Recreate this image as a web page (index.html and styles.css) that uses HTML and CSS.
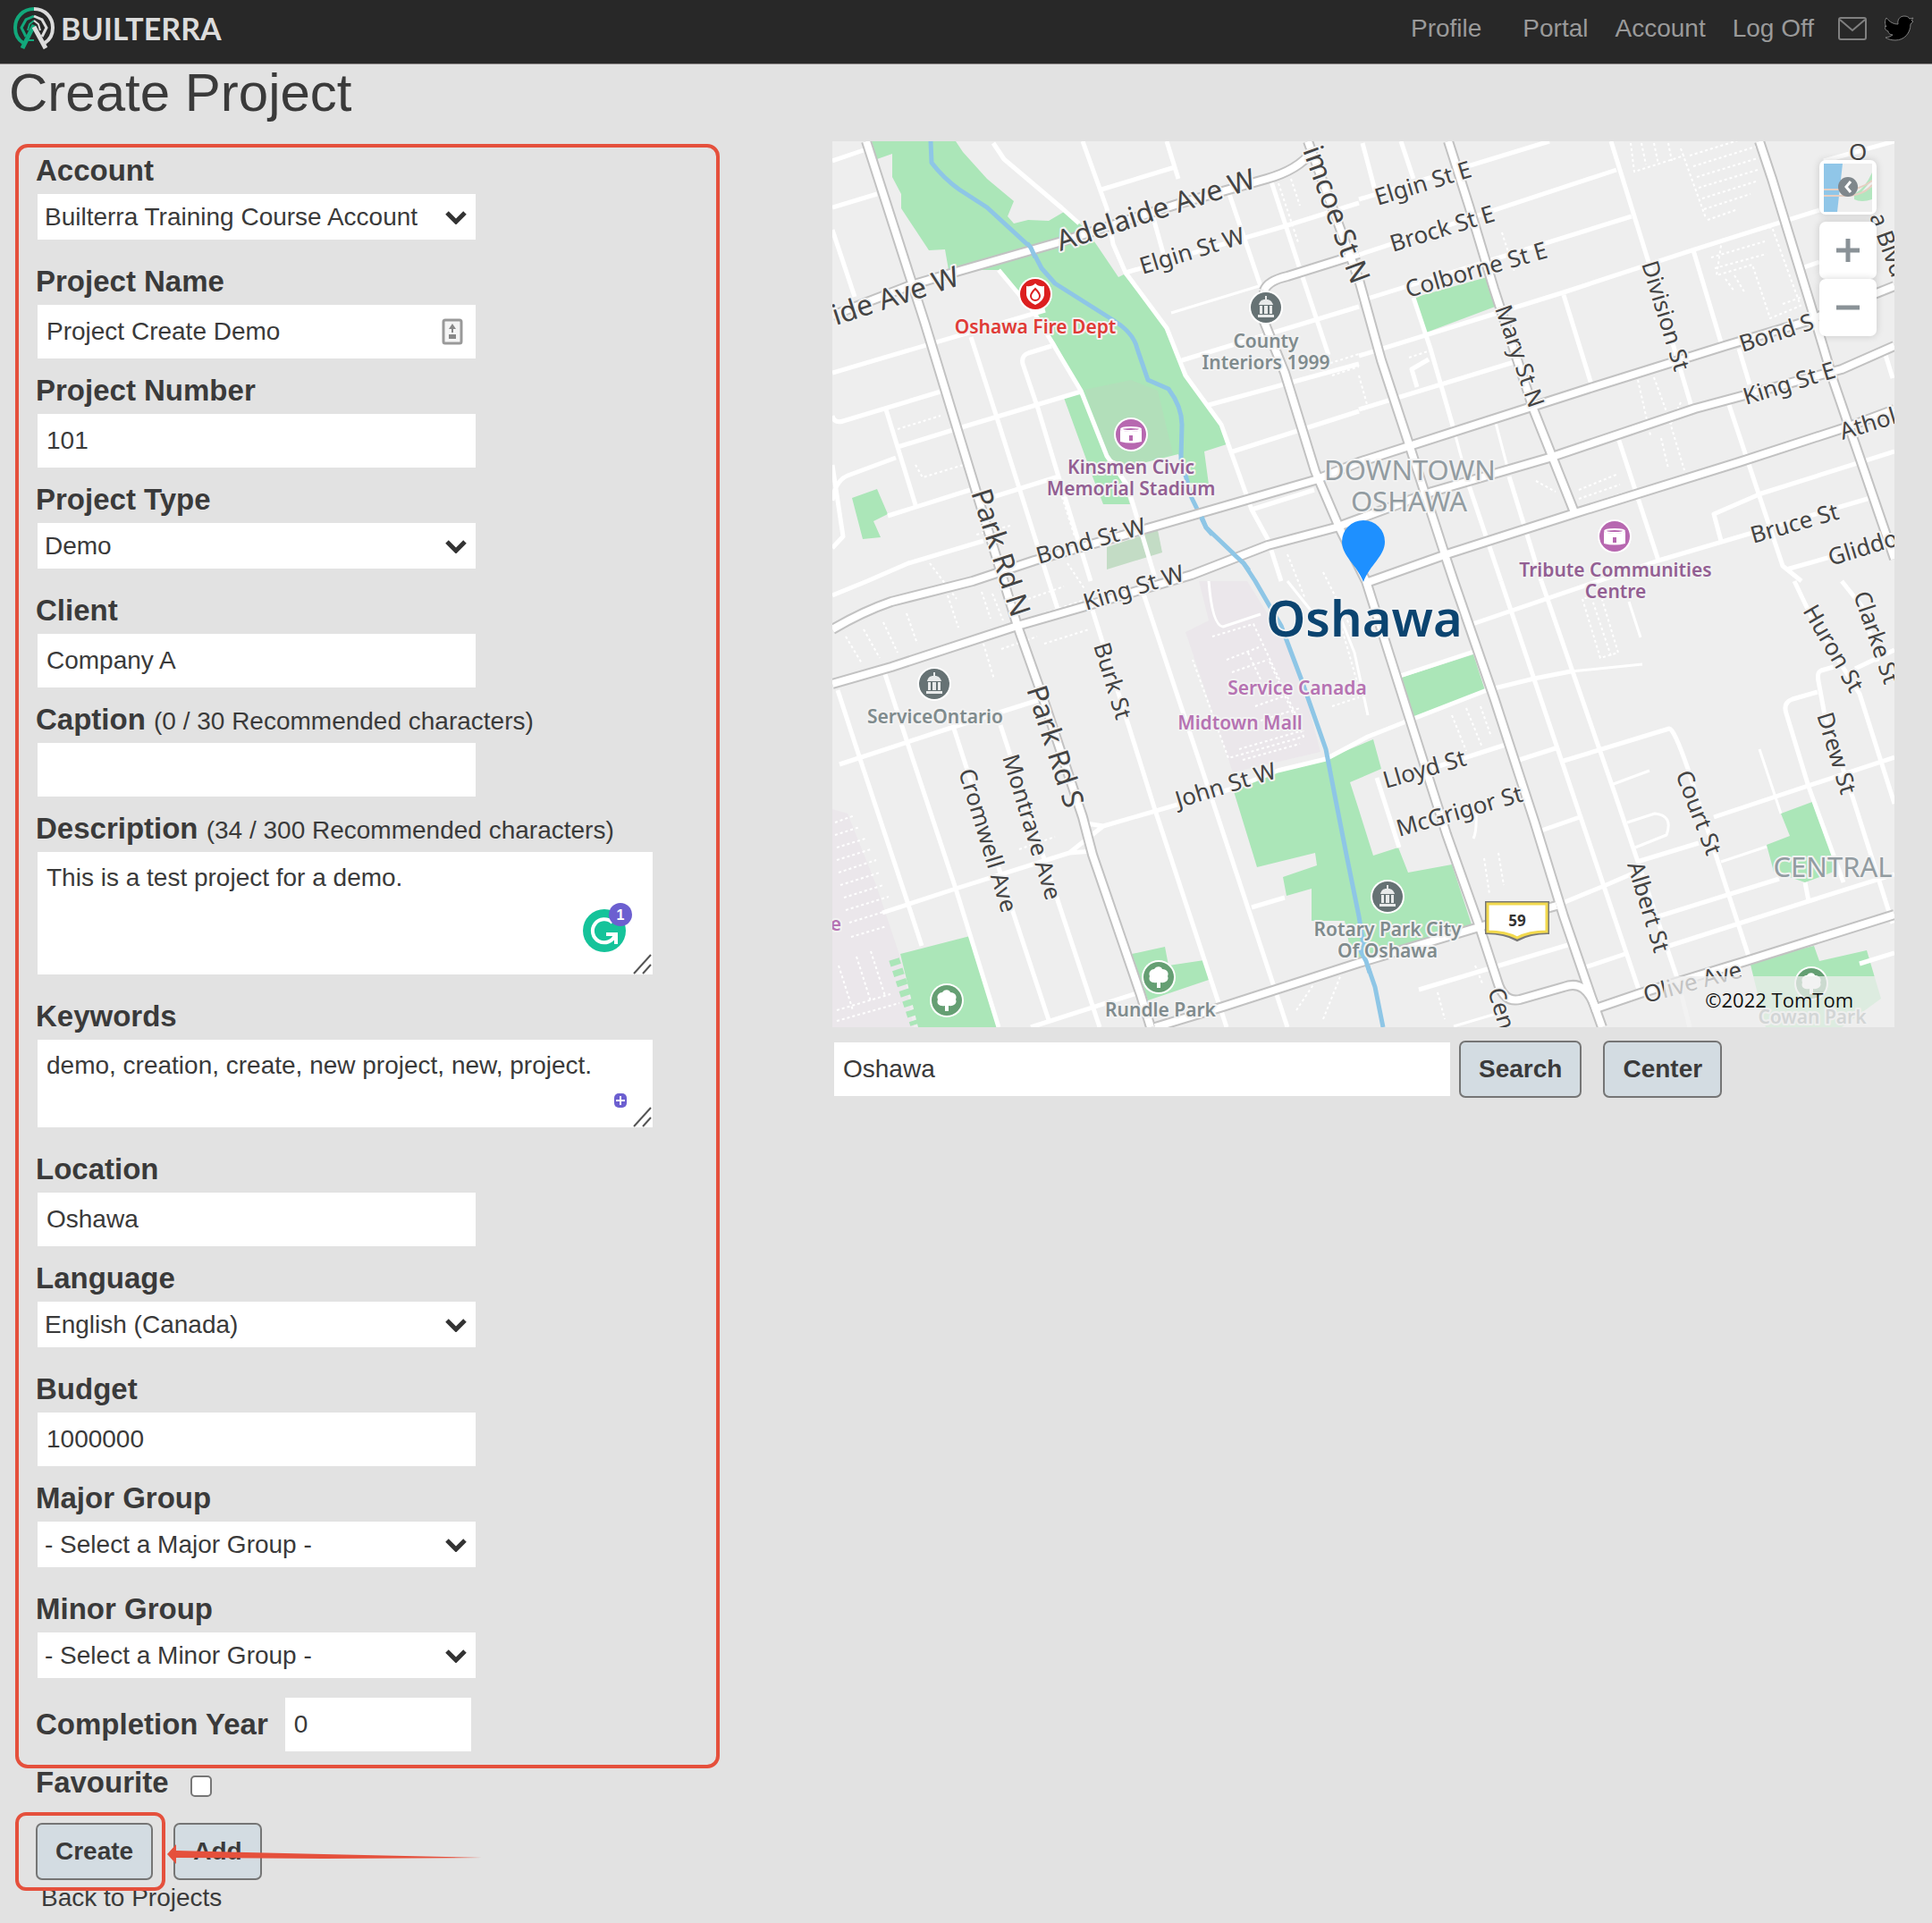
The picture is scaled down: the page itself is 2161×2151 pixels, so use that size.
FILE: index.html
```html
<!DOCTYPE html>
<html lang="en">
  <head>
    <meta charset="UTF-8" />
    <meta name="viewport" content="width=device-width, initial-scale=1.0" />
    <title>Create Project - Builterra</title>
    <link rel="stylesheet" href="styles.css">
  </head>
  <body>
    <header class="topbar">
      <a class="logo" href="#">
        <svg class="logo-mark" viewBox="0 0 46 48" aria-hidden="true">
          <g fill="none" stroke="#12a87b">
            <path d="M23 2C11 2 2 11 2 23c0 9 4 14 9 17" stroke-width="4" />
            <path d="M23 10l-9 4-5 9 5 10" stroke-width="3" />
            <path d="M10 46l13-26" stroke-width="5" />
            <path d="M23 15l-5 4-2 7M17 37h6" stroke-width="2" />
          </g>
          <g fill="none" stroke="#dcdcdc">
            <path d="M23 2c12 0 21 9 21 21 0 9-4 14-9 17" stroke-width="4" />
            <path d="M23 10l9 4 5 9-5 10" stroke-width="3" />
            <path d="M36 46L23 22" stroke-width="5" />
            <path d="M23 15l5 4 2 7" stroke-width="2" />
          </g>
        </svg>
        <span>BUILTERRA</span>
      </a>
      <nav class="nav">
        <a class="nav-profile" href="#">Profile</a>
        <a href="#">Portal</a>
        <a href="#">Account</a>
        <a href="#">Log Off</a>
        <a class="nav-icon" href="#" aria-label="Mail">
          <svg width="32" height="26" viewBox="0 0 32 26">
            <rect x="1" y="1" width="30" height="24" rx="2" />
            <path d="M2 3l14 12L30 3" />
          </svg>
        </a>
        <a class="nav-icon" href="#" aria-label="Twitter">
          <svg width="33" height="30" viewBox="0 0 33 30">
            <path class="bird" d="M2 3c4 5 8 7 13 7-1-5 2-9 7-9 3 0 5 1 6 3l4-1-2 3 2 1-3 3c0 10-7 18-17 18-4 0-8-1-11-3 3 0 5-1 8-3-3 0-5-2-5-4-3-1-4-3-4-6l2 1C0 10 0 6 2 3z" />
          </svg>
        </a>
      </nav>
    </header>

    <main>
      <h1>Create Project</h1>

      <div class="columns">
        <form class="project-form">
          <div class="details">
            <div class="field field-select">
              <label for="account">Account</label>
              <select id="account"><option>Builterra Training Course Account</option></select>
            </div>
            <div class="field">
              <label for="name">Project Name</label>
              <div class="input-wrap">
                <input type="text" id="name" value="Project Create Demo" />
                <svg class="autofill" width="24" height="30" viewBox="0 0 24 30" aria-hidden="true">
                  <rect x="2" y="2" width="20" height="26" rx="2" fill="#f4f4f4" stroke="#999" stroke-width="3" />
                  <path d="M12 6l4 6h-3v4h-2v-4H8zM8 18h8v5H8z" fill="#888" />
                </svg>
              </div>
            </div>
            <div class="field">
              <label for="number">Project Number</label>
              <input type="text" id="number" value="101" />
            </div>
            <div class="field field-select">
              <label for="type">Project Type</label>
              <select id="type"><option>Demo</option></select>
            </div>
            <div class="field">
              <label for="client">Client</label>
              <input type="text" id="client" value="Company A" />
            </div>
            <div class="field">
              <label for="caption">Caption <small>(0 / 30 Recommended characters)</small></label>
              <input type="text" id="caption" />
            </div>
            <div class="field field-area">
              <label for="description">Description <small>(34 / 300 Recommended characters)</small></label>
              <div class="area-wrap">
                <textarea id="description" class="area-tall">This is a test project for a demo.</textarea>
                <svg class="area-tools" width="90" height="80" viewBox="0 0 90 80" aria-hidden="true">
                  <circle cx="36" cy="31" r="24" fill="#15c39a" />
                  <path d="M45 22a13 13 0 1 0 3 14M38 35h11v11" fill="none" stroke="#fff" stroke-width="4" />
                  <circle cx="54" cy="13" r="13" fill="#6c5fd0" />
                  <text x="54" y="19">1</text>
                  <path class="grip" d="M69 79l19-21M79 79l9-10" />
                </svg>
              </div>
            </div>
            <div class="field field-area">
              <label for="keywords">Keywords</label>
              <div class="area-wrap">
                <textarea id="keywords" class="area-short">demo, creation, create, new project, new, project.</textarea>
                <svg class="area-tools" width="90" height="80" viewBox="0 0 90 80" aria-hidden="true">
                  <rect x="47" y="42" width="14" height="16" rx="5" fill="#6c5fd0" />
                  <path d="M54 45v10M49 50h10" stroke="#fff" stroke-width="2" />
                  <path class="grip" d="M69 79l19-21M79 79l9-10" />
                </svg>
              </div>
            </div>
            <div class="field">
              <label for="location">Location</label>
              <input type="text" id="location" value="Oshawa" />
            </div>
            <div class="field field-select">
              <label for="language">Language</label>
              <select id="language"><option>English (Canada)</option></select>
            </div>
            <div class="field">
              <label for="budget">Budget</label>
              <input type="text" id="budget" value="1000000" />
            </div>
            <div class="field field-select">
              <label for="major">Major Group</label>
              <select id="major"><option>- Select a Major Group -</option></select>
            </div>
            <div class="field field-select">
              <label for="minor">Minor Group</label>
              <select id="minor"><option>- Select a Minor Group -</option></select>
            </div>
            <div class="field-inline">
              <label for="year">Completion Year</label>
              <input type="text" id="year" value="0" />
            </div>
          </div>

          <div class="favourite">
            <label for="favourite">Favourite</label>
            <input type="checkbox" id="favourite" />
          </div>

          <div class="actions">
            <span class="highlight"><button type="button">Create</button></span>
            <button type="button">Add</button>
            <svg class="arrow" width="352" height="22" viewBox="0 0 352 22" aria-hidden="true">
              <path d="M0 11L10 0v7l165 4 177 4-177 1-165-1v7z" />
            </svg>
          </div>
          <a class="back" href="#">Back to Projects</a>
        </form>

        <section class="map-column">
          <div class="map">
            <svg class="map-canvas" viewBox="931 158 1188 991" role="img" aria-label="Map of Oshawa">
              <defs>
                <g id="pin-civic">
                  <circle r="19" fill="#fff" /><circle r="17" fill="#667274" />
                  <path d="M-9 11H9V8H-9zM-7 7h3V-2h-3zM-2 7h4V-2h-4zM4 7h3V-2H4zM-8-3H8C7-7 4-9 1-9v-4h-2v4c-4 0-6 2-7 6z" fill="#e8eaea" />
                </g>
                <g id="pin-venue">
                  <circle r="19" fill="#fff" /><circle r="17" fill="#b768b0" />
                  <path d="M-12-5Q0-1 12-5V8Q0 11-12 8z" fill="#fff" />
                  <ellipse cy="-6" rx="11" ry="2" fill="none" stroke="#fff" stroke-width="2" />
                  <path d="M-2 1h4v6h-4z" fill="#b768b0" />
                </g>
                <g id="pin-park">
                  <circle r="19" fill="#fff" /><circle r="17" fill="#659f73" />
                  <path d="M-2 12V6c-6 1-10-2-8-7-2-5 2-8 5-8 3-4 8-3 9 0 5 0 8 4 6 8 2 4-2 8-8 7v6z" fill="#fff" />
                </g>
                <path id="r-park" d="M969 158L1035 363 1092 550 1138 700 1165 776 1211 914 1222 956 1276 1113 1287 1149" />
                <path id="r-adelaide" d="M931 353L1016 320 1073 303 1188 270 1318 228 1417 200Q1452 190 1467 170" />
                <path id="r-simcoe" d="M1463 158L1509 283 1520 313 1545 403 1577 500 1616 620 1626 650 1671 780 1716 918 1749 1025 1782 1121 1792 1149" />
                <path id="r-centre" d="M1414 325L1414 360 1437 417 1471 527 1498 590 1528 650 1573 792 1618 933 1655 1037 1675 1098Q1682 1122 1700 1118L1749 1104Q1775 1094 1786 1132M1414 325Q1418 314 1440 309L1520 284" />
                <path id="r-mary" d="M1620 158L1643 230 1671 323 1716 460 1761 573" />
                <path id="r-east" d="M1968 158L1982 200 2027 347 2051 427 2084 523 2119 625" />
                <path id="r-bond" d="M931 704Q965 684 997 673L1088 650 1157 627 1287 590 1471 537 1520 517 1626 483 1782 433 1929 387 2019 360 2119 320" />
                <path id="r-king" d="M931 765L997 746 1138 700 1211 679 1333 643 1418 610 1494 590 1602 550 1733 512 1896 457 2060 413 2119 387" />
                <path id="r-athol" d="M1528 652L1618 620 1765 573 1945 517 2068 477 2119 458" />
                <path id="r-olive" d="M1292 1149L1368 1126 1520 1077 1651 1038 1741 1013M1788 1127L1835 1111 1953 1075 2119 1023" />
              </defs>

              <rect x="931" y="158" width="1188" height="991" fill="#eee" />

              <!-- malls and parks -->
              <path class="mall" d="M1341 650H1395L1420 690 1440 720 1456 761 1477 841 1379 864 1326 707 1352 694zM931 905L948 910 980 990 1010 1080 1022 1149H931z" />
              <path class="park" d="M975 158H1069L1077 170 1104 200 1134 225 1127 242 1134 250 1150 246 1173 247 1190 237 1211 253 1226 273 1251 310 1257 307 1305 367 1326 420 1364 473 1372 497 1347 505 1352 542 1330 540 1318 508 1262 522 1240 512 1209 437 1180 383 1157 350 1117 302H1061L1057 279 1039 280 1008 233V217L998 198V172L981 178z" />
              <path class="park" d="M1190 445L1209 440 1238 510 1257 543 1264 564H1234L1222 533z" />
              <path class="park" d="M953 557L981 547 993 575 977 583 985 601 965 603z" />
              <path class="park" d="M1581 333L1663 310 1675 342 1595 372z" />
              <path class="park" d="M1567 758L1648 732 1661 772 1581 804z" />
              <path class="park" d="M1379 882L1429 862 1483 849 1536 827 1545 860 1510 875 1520 906 1536 957 1564 948 1575 976 1624 967 1647 1037 1520 1074 1509 1056 1504 1030 1467 1030V994L1439 1002 1435 981 1473 968 1471 954 1406 970z" />
              <path class="park" d="M1266 1067L1303 1059 1307 1080 1347 1074 1352 1096 1284 1119z" />
              <path class="park" d="M1007 1067L1085 1047 1117 1149H1027z" />
              <path class="park" d="M1992 910L2027 897 2049 956 2051 975 2019 987 1984 975 1976 945 2002 935z" />
              <path class="park" d="M1957 1075L2029 1058 2035 1075 2088 1063 2104 1117 2060 1149H1975z" />
              <path class="hedge" d="M1000 1073L1024 1146" />
              <path d="M1213 436L1265 425 1295 437 1312 508 1262 522 1240 512z" fill="#b2dfba" />
              <path d="M1238 612L1295 593 1300 618 1238 637z" fill="#c3dcc5" />

              <!-- parking lots -->
              <g class="lots">
                <path d="M1824 160l4 32 56-18M1836 160l5 24M1850 160l5 24M1866 160l4 20M1880 166l28 78M1890 174l70-22M1894 186l70-22M1898 198l68-21M1900 210l66-20M1904 222l60-19M1906 234l52-17M1910 246l34-12" />
                <path d="M1926 268l56-14 32 88-34 14-20-60-40 12zM1914 288l60-18M1918 300l58-16M1930 312l10 14M1940 308l12 20M1994 340l22-8" />
                <path d="M1832 425l14 62M1850 422l16 44M1866 466l18 60M1880 450l-12 26M1858 490l8 34M1766 548l44-18M1766 558l46-16M1768 568l46-16M1718 538l22 12" />
                <path d="M1356 712l46-14 56 120M1372 738l36-14M1378 752l40-14M1396 730l14 30M1420 740l38 84-84 24-40-110M1386 838l68-20M1390 850l64-18M1404 790l40-14M1410 806l44-14" />
                <path d="M946 712l18 30M966 704l18 32M988 696l16 34M1014 686l12 34M1060 666l12 36M1098 662l10 30M1110 664l12 30M1150 670l40-14M1156 690l60-20M1168 720l50-16M1100 720l12 40M1120 726l40-14" />
                <path d="M934 920l22-8M934 934l28-9M936 948l32-10M936 962l38-12M938 976l42-14M940 990l44-14M944 1004l44-14M946 1018l48-15M950 1032l48-15M952 1048l40-12M938 1080l16 50M958 1070l16 50M974 1064l16 50M936 1130l60-18M936 1142l70-20" />
                <path d="M1770 670l20 66 20-6-20-66zM1780 668l22 66M1624 800l16 40M1640 792l18 44M1656 790l12 34M1660 960l6 40M1676 954l6 36M1608 1110l8 30M1650 1080l8 20M1140 950l40-14M1004 480l48-15M1024 520l8 14 52-16M1186 550l16 50M1130 588l-38 10" />
                <path d="M1430 205l22 66M1444 200l10 30M1482 408l38-12M1490 420l30-10M1576 400l24-8M1520 420l10 36M1680 260l14 44M1440 620l20 50M1480 640l30 60M1194 630l20 30M1040 630l30 40M1500 700l20 70M1490 790l30-10M1480 1140l20-50M1450 1130l20-30" />
              </g>

              <!-- local streets -->
              <g class="streets">
                <path d="M931 180L966 168M931 232L981 217M931 257L956 332M1111 160L1123 178 1188 233 1207 250M1211 158L1238 233 1245 273 1259 305 1305 367 1326 420 1366 475 1400 570 1418 603 1433 650M1305 158L1318 200M1287 233L1303 290M1232 212L1314 187M1375 217L1410 320M1421 200L1456 307 1486 397M1259 305L1437 253 1520 227M1322 403L1520 343M1352 453L1520 407M1379 505L1520 460" />
                <path d="M931 417L1169 347M931 465Q933 474 943 471L1052 438M1004 500L1069 480 1209 438M991 458L1025 568M1086 377L1115 467 1173 650 1184 684M1176 387L1150 395Q1142 398 1144 407L1161 457 1184 533 1220 650M1117 302L1157 350 1209 437 1238 510 1261 543 1293 650M931 560Q934 538 948 532L1002 512M993 577L1085 548M1104 558L1184 533M931 520L943 600 931 613M931 666L970 650 1016 630 1100 605M1400 570L1470 548" />
                <path d="M937 772L962 849 1016 1012 1031 1058M989 751L1016 834 1069 994 1117 1149M939 855L1067 813 1165 782M1067 815L1132 1017 1174 1144M1119 811L1184 1010 1230 1149M987 1021L1069 994 1196 954 1234 924 1379 882M1215 921L1234 924M1196 954L1222 952M1219 673L1291 903 1372 1149M1278 661L1356 895 1440 1149M1400 1015L1437 1004M1153 1149L1272 1111M1379 882L1429 862 1483 849 1530 824 1573 807 1663 772 1716 759 1757 751" />
                <path d="M1524 160L1538 213M1567 158L1581 200M1520 223L1733 158M1520 285L1808 190M1520 337L1825 242M1520 398L1749 327 1892 280 2035 235M1520 458L1700 403M1802 158L1843 290 1892 455M1894 280L1925 383M1749 330L1780 430M1581 333L1600 390 1626 480M1643 543L1679 650M1585 433L1579 413 1598 402M1688 533L1724 650M1810 490L1855 627M1933 450L1994 633 2015 650M1945 390L1957 430M2109 397L2117 423M2015 300L2035 293M2040 180L2119 158" />
                <path d="M1647 698L1855 627 2092 557M1925 605L1917 575 1970 552 2119 505M1998 637L2119 603M1679 650L1835 1113M1724 650L1806 887 1876 1094 1890 1149M1563 757L1651 728M1600 860L1684 833M1696 851L1743 836M1749 851L1867 815Q1872 814 1888 860L1957 1073M1724 929L1767 914M1743 1012L1794 991 1831 975M1831 964L1900 943M1917 914L2119 847M1855 1025L1990 983M1867 1058L1945 1033 2023 1008 2119 978M2019 987L2023 1008" />
                <path d="M2033 774L2005 782Q1994 786 1998 798L2023 880 2062 987M2051 746L2037 750Q2032 752 2034 762L2041 800 2072 891 2117 1033M2007 650L2027 692 2080 776 2119 899M2060 650L2084 680 2100 740M2075 748L2119 727M1587 1107L1757 1056M1773 1082L1818 1067M1540 870L1565 948M2080 1078L2119 1066" />
              </g>
              <g class="lanes">
                <path d="M1310 350L1418 317M1757 751L1837 743M1822 673L1835 713M1802 878L1845 862M1820 920L1851 910Q1872 912 1864 934L1829 948M1925 964L1976 947M1968 838L1992 910M1673 473L1688 530M1626 480L1643 543M1352 650Q1356 700 1368 701L1410 687M1626 1148L1680 1132M1440 650L1480 700M1651 910Q1652 930 1648 938M1495 680L1515 730 1530 800" />
              </g>

              <path class="river" d="M1041 158L1042 182Q1056 200 1073 212L1104 232 1153 277 1165 300 1180 317 1245 358Q1268 372 1272 390L1284 425 1307 435Q1322 455 1322 475L1321 513 1333 557 1349 590 1391 630 1404 650 1433 700 1456 761 1483 838 1494 895 1506 956 1520 1025 1528 1075 1538 1104 1547 1149" />

              <!-- main roads: grey casing under a white line -->
              <g class="casing">
                <use href="#r-adelaide" /><use href="#r-bond" /><use href="#r-king" /><use href="#r-athol" /><use href="#r-olive" />
                <use href="#r-park" /><use href="#r-centre" /><use href="#r-simcoe" /><use href="#r-mary" /><use href="#r-east" />
              </g>
              <g class="roads">
                <use href="#r-adelaide" /><use href="#r-bond" /><use href="#r-king" /><use href="#r-athol" /><use href="#r-olive" />
                <use href="#r-park" /><use href="#r-centre" /><use href="#r-simcoe" /><use href="#r-mary" /><use href="#r-east" />
              </g>
              <path class="river" d="M1149 272L1153 277 1158 288M1344 578L1349 590 1356 598M1378 618L1391 630 1397 638M1520 1060L1528 1075 1532 1088" />

              <g class="street-names major">
                <text transform="translate(1186 281) rotate(-18)">Adelaide Ave W</text>
                <text transform="translate(935 364) rotate(-18)">ide Ave W</text>
                <text transform="translate(1457 168) rotate(70)">imcoe St N</text>
                <text transform="translate(1086 551) rotate(72)">Park Rd N</text>
                <text transform="translate(1148 771) rotate(72)">Park Rd S</text>
              </g>
              <g class="street-names">
                <text transform="translate(1278 307) rotate(-17)">Elgin St W</text>
                <text transform="translate(1541 230) rotate(-17)">Elgin St E</text>
                <text transform="translate(1558 282) rotate(-17)">Brock St E</text>
                <text transform="translate(1575 333) rotate(-16)">Colborne St E</text>
                <text transform="translate(1672 345) rotate(71)">Mary St N</text>
                <text transform="translate(1836 295) rotate(73)">Division St</text>
                <text transform="translate(1949 394) rotate(-18)">Bond S</text>
                <text transform="translate(1953 453) rotate(-17)">King St E</text>
                <text transform="translate(2061 492) rotate(-17)">Athol</text>
                <text transform="translate(1961 608) rotate(-16)">Bruce St</text>
                <text transform="translate(2048 633) rotate(-17)">Gliddon</text>
                <text transform="translate(2091 242) rotate(70)">a Blvd</text>
                <text transform="translate(2068 179)">O</text>
                <text transform="translate(1162 631) rotate(-16)">Bond St W</text>
                <text transform="translate(1215 683) rotate(-17)">King St W</text>
                <text transform="translate(1223 722) rotate(73)">Burk St</text>
                <text transform="translate(1121 847) rotate(73)">Montrave Ave</text>
                <text transform="translate(1072 863) rotate(73)">Cromwell Ave</text>
                <text transform="translate(1318 904) rotate(-17)">John St W</text>
                <text transform="translate(1550 882) rotate(-16)">Lloyd St</text>
                <text transform="translate(1565 936) rotate(-16)">McGrigor St</text>
                <text transform="translate(2016 683) rotate(60)">Huron St</text>
                <text transform="translate(2073 665) rotate(71)">Clarke St</text>
                <text transform="translate(2032 800) rotate(73)">Drew St</text>
                <text transform="translate(1874 866) rotate(69)">Court St</text>
                <text transform="translate(1820 967) rotate(73)">Albert St</text>
                <text transform="translate(1664 1108) rotate(73)">Cen</text>
                <text transform="translate(1841 1122) rotate(-15)">Olive Ave</text>
              </g>
              <g class="districts">
                <text x="1577" y="537">DOWNTOWN</text>
                <text x="1576" y="572">OSHAWA</text>
                <text x="2050" y="981">CENTRAL</text>
              </g>
              <g class="places">
                <text class="fire" x="1158" y="373">Oshawa Fire Dept</text>
                <text x="1416" y="389">County</text>
                <text x="1416" y="413">Interiors 1999</text>
                <text class="venue" x="1265" y="530">Kinsmen Civic</text>
                <text class="venue" x="1265" y="554">Memorial Stadium</text>
                <text class="venue" x="1807" y="645">Tribute Communities</text>
                <text class="venue" x="1807" y="669">Centre</text>
                <text class="shop" x="1451" y="777">Service Canada</text>
                <text class="shop" x="1387" y="816">Midtown Mall</text>
                <text class="shop" x="935" y="1041">e</text>
                <text x="1046" y="809">ServiceOntario</text>
                <text x="1552" y="1047">Rotary Park City</text>
                <text x="1552" y="1071">Of Oshawa</text>
                <text x="1298" y="1137">Rundle Park</text>
                <text x="2027" y="1145">Cowan Park</text>
              </g>

              <use href="#pin-civic" x="1416" y="344" />
              <use href="#pin-civic" x="1045" y="765" />
              <use href="#pin-civic" x="1552" y="1003" />
              <use href="#pin-venue" x="1265" y="486" />
              <use href="#pin-venue" x="1806" y="600" />
              <use href="#pin-park" x="1296" y="1093" />
              <use href="#pin-park" x="1059" y="1119" />
              <use href="#pin-park" x="2026" y="1100" />
              <g transform="translate(1158 329)">
                <circle r="19" fill="#fff" /><circle r="17" fill="#dc1f1f" />
                <path d="M-10-9Q-4-8 0-12 4-8 10-9V1Q9 8 0 12-9 8-10 1z" fill="#fff" />
                <path d="M0-6C4-2 5 0 5 2a5 5 0 0 1-10 0c0-2 1-4 5-8z" fill="none" stroke="#dc1f1f" stroke-width="2" />
              </g>

              <path d="M1663 1010h68v33q-20 0-34 8-14-8-34-8z" fill="#fff" stroke="#777" stroke-width="4" />
              <path d="M1664 1011h66v31q-20 0-33 7-13-7-33-7z" fill="#fff" stroke="#f2d94e" stroke-width="3" />
              <text class="route" x="1697" y="1036">59</text>

              <text class="city" x="1526" y="712">Oshawa</text>
              <path d="M1525 651C1518 632 1501 622 1501 606a24 24 0 0 1 48 0c0 16-17 26-24 45z" fill="#1e90ff" />
            </svg>

            <div class="map-controls">
              <button type="button" class="map-style" aria-label="Map style">
                <svg width="54" height="54" viewBox="0 0 54 54">
                  <rect width="54" height="54" fill="#eee" />
                  <path d="M0 0h21l-6 54H0z" fill="#90c6e8" />
                  <path d="M34 34q12-6 20-24v8L42 32l12-6v14q-12 4-20 0z" fill="#b3e6bf" />
                  <path d="M0 29h24q18 0 30-10M0 36h24q20 0 30-12" fill="none" stroke="#e6cfc2" stroke-width="2" />
                  <circle cx="27" cy="26" r="11" fill="#7f878c" />
                  <path d="M30 20l-5 6 5 6" fill="none" stroke="#fff" stroke-width="3" />
                </svg>
              </button>
              <div class="zoom">
                <button type="button" aria-label="Zoom in">
                  <svg width="26" height="26" viewBox="0 0 26 26"><path d="M13 0v26M0 13h26" /></svg>
                </button>
                <button type="button" aria-label="Zoom out">
                  <svg width="26" height="26" viewBox="0 0 26 26"><path d="M0 13h26" /></svg>
                </button>
              </div>
            </div>
            <div class="attribution">©2022 TomTom</div>
          </div>

          <div class="map-search">
            <input type="text" class="search-box" value="Oshawa" aria-label="Search the map" />
            <button type="button">Search</button>
            <button type="button" class="center-button">Center</button>
          </div>
        </section>
      </div>
    </main>
  </body>
</html>
```
FILE: styles.css
```css
* {
  box-sizing: border-box;
}

body {
  margin: 0;
  background: #e2e2e2;
  color: #3a3a3a;
  font-family: "Liberation Sans", Arial, sans-serif;
  font-size: 28px;
  line-height: 32px;
}

a {
  color: inherit;
  text-decoration: none;
}

/* header */
.topbar {
  display: flex;
  justify-content: space-between;
  align-items: center;
  height: 72px;
  padding: 0 20px 7px 15px;
  background: #282828;
  border-bottom: 1px solid #8a8585;
}

.logo {
  display: flex;
  align-items: center;
  gap: 7px;
  color: #dcdcdc;
  font-family: Lato, sans-serif;
  font-size: 34px;
  font-weight: bold;
}

.logo-mark {
  width: 46px;
  height: 48px;
}

.nav {
  display: flex;
  align-items: center;
  gap: 30px;
  color: #9a9a9a;
}

.nav-profile {
  margin-right: 16px;
}

.nav-icon {
  display: flex;
  margin-left: -3px;
}

.nav-icon + .nav-icon {
  margin-left: -10px;
}

.nav-icon svg {
  fill: none;
  stroke: #808080;
  stroke-width: 2;
}

.nav-icon .bird {
  fill: #000;
  stroke-width: 1;
}

h1 {
  margin: 0 0 22px;
  padding-left: 10px;
  font-size: 60px;
  font-weight: normal;
  line-height: 64px;
}

.columns {
  display: grid;
  grid-template-columns: minmax(720px, 788px) minmax(0, 1fr);
  gap: 126px;
  align-items: start;
  padding: 0 42px 0 17px;
}

/* form */
.project-form {
  padding-top: 3px;
}

.details {
  padding: 7px 19px 15px;
  border: 4px solid #e5503c;
  border-radius: 14px;
}

label {
  display: block;
  font-size: 33px;
  font-weight: bold;
  line-height: 38px;
}

label small {
  font-size: 28px;
  font-weight: normal;
  line-height: 28px;
}

.field {
  margin-bottom: 17px;
}

.field label {
  margin-bottom: 7px;
}

.field-select,
.field-area {
  margin-bottom: 28px;
}

.field input,
.field select,
.area-wrap {
  display: block;
  margin-left: 2px;
}

input,
select,
textarea {
  border: 0;
  border-radius: 0;
  background: #fff;
  color: #3a3a3a;
  font: inherit;
}

input {
  width: 490px;
  height: 60px;
  padding: 0 10px;
}

select {
  width: 490px;
  height: 51px;
  padding: 0 36px 0 8px;
  appearance: none;
  background: #fff url("data:image/svg+xml,%3Csvg xmlns='http://www.w3.org/2000/svg' width='24' height='16'%3E%3Cpath d='M2 3l10 10L22 3' fill='none' stroke='%23333' stroke-width='5'/%3E%3C/svg%3E") no-repeat right 10px center;
}

.input-wrap {
  position: relative;
  width: 492px;
}

.autofill {
  position: absolute;
  right: 14px;
  top: 15px;
}

.area-wrap {
  position: relative;
  width: 688px;
}

textarea {
  display: block;
  width: 100%;
  padding: 13px 10px;
  resize: none;
  overflow: hidden;
}

.area-tall {
  height: 137px;
}

.area-short {
  height: 98px;
}

.area-tools {
  position: absolute;
  right: 0;
  bottom: 0;
  pointer-events: none;
}

.area-tools text {
  fill: #fff;
  font-size: 16px;
  font-weight: bold;
  text-anchor: middle;
}

.grip {
  fill: none;
  stroke: #555;
  stroke-width: 2;
}

.field-inline {
  display: flex;
  align-items: center;
  gap: 19px;
  margin-top: -6px;
}

.field-inline input {
  width: 208px;
}

.favourite {
  display: flex;
  align-items: flex-end;
  gap: 24px;
  height: 32px;
  margin-left: 23px;
}

.favourite label {
  line-height: 32px;
}

.favourite input {
  width: 24px;
  height: 24px;
  margin: 0;
  appearance: none;
  border: 2px solid #767676;
  border-radius: 5px;
}

.favourite input:checked {
  background: #3a3a3a;
}

button {
  height: 64px;
  padding: 0 20px;
  border: 2px solid #757575;
  border-radius: 7px;
  background: #d3dce2;
  color: #3a3a3a;
  font: inherit;
  font-weight: bold;
}

.actions {
  position: relative;
  display: flex;
  gap: 23px;
  margin: 29px 0 4px 23px;
}

.highlight {
  position: relative;
}

.highlight::after {
  content: "";
  position: absolute;
  inset: -12px -14px -12px -23px;
  border: 4px solid #e5503c;
  border-radius: 12px;
  pointer-events: none;
}

.arrow {
  position: absolute;
  left: 147px;
  top: 24px;
  fill: #e5503c;
}

.back {
  margin-left: 29px;
}

/* map */
.map {
  position: relative;
  overflow: hidden;
}

.map-canvas {
  display: block;
  width: 100%;
}

.map-canvas text {
  font-family: "Noto Sans", sans-serif;
  paint-order: stroke;
  stroke: #f2f2f2;
  stroke-width: 4px;
  stroke-linejoin: round;
}

.park {
  fill: #abe6b8;
}

.mall {
  fill: #ebe7eb;
}

.hedge {
  stroke: #abe6b8;
  stroke-width: 12;
  stroke-dasharray: 7 5;
}

.lots,
.lanes,
.streets,
.roads,
.casing,
.river {
  fill: none;
  stroke: #fff;
  stroke-linejoin: round;
}

.lots {
  stroke-width: 2;
  stroke-dasharray: 3 3;
}

.lanes {
  stroke-width: 3;
}

.streets {
  stroke-width: 5;
}

.roads {
  stroke-width: 8;
}

.casing {
  stroke: #c2c2c2;
  stroke-width: 12;
}

.river {
  stroke: #8ec6e6;
  stroke-width: 5;
}

.street-names {
  fill: #444;
  font-size: 26px;
}

.major {
  font-size: 32px;
}

.districts {
  fill: #929ca1;
  font-size: 31px;
  text-anchor: middle;
}

.places {
  fill: #7f8b8d;
  font-size: 21px;
  font-weight: 600;
  text-anchor: middle;
}

.places .fire {
  fill: #e03b36;
}

.places .venue {
  fill: #935f93;
}

.places .shop {
  fill: #b673b2;
}

.map-canvas .route {
  fill: #333;
  stroke: none;
  font-size: 17px;
  font-weight: bold;
  text-anchor: middle;
}

.map-canvas .city {
  fill: #0b4470;
  font-size: 56px;
  font-weight: 600;
  text-anchor: middle;
}

.map-controls {
  position: absolute;
  top: 21px;
  right: 20px;
  display: flex;
  flex-direction: column;
  gap: 8px;
}

.map-controls button {
  display: flex;
  align-items: center;
  justify-content: center;
  width: 64px;
  height: 64px;
  padding: 0;
  border: 0;
  background: #fff;
  box-shadow: 0 0 8px rgba(0, 0, 0, 0.16);
}

.map-controls .map-style {
  height: 61px;
}

.zoom path {
  fill: none;
  stroke: #8a9297;
  stroke-width: 5;
}

.attribution {
  position: absolute;
  right: 0;
  bottom: 0;
  padding: 10px 46px 15px;
  background: rgba(238, 238, 238, 0.75);
  color: #111;
  font-family: "Open Sans", sans-serif;
  font-size: 22px;
}

.map-search {
  display: flex;
  align-items: center;
  margin: 15px 0 0 2px;
}

.search-box {
  flex: 0 1 689px;
  margin-right: 10px;
}

.center-button {
  margin-left: 24px;
}
```
